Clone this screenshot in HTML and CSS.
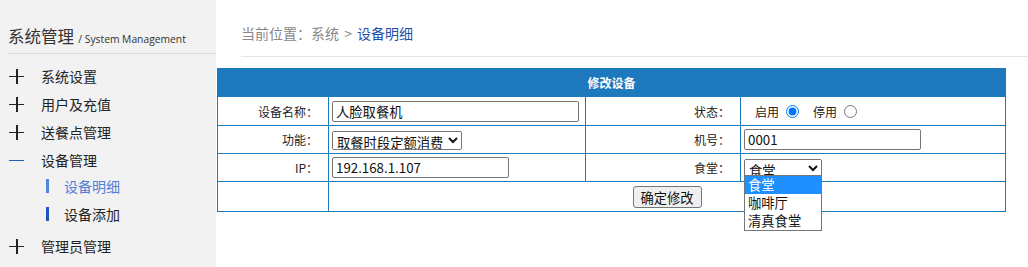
FILE: index.html
```html
<!doctype html>
<html>
<head>
<title>设备明细</title>
<link rel="stylesheet" href="styles.css">
</head>
<body>
<div class="page">
<aside class="side">
<div class="side-title">系统管理 <span class="sub">/ System Management</span></div>
<ul class="menu">
<li class="item"><span class="ico plus"></span>系统设置</li>
<li class="item"><span class="ico plus"></span>用户及充值</li>
<li class="item"><span class="ico plus"></span>送餐点管理</li>
<li class="item open"><span class="ico minus"></span>设备管理</li>
<li class="subitem on"><span class="bar"></span>设备明细</li>
<li class="subitem"><span class="bar"></span>设备添加</li>
<li class="item last"><span class="ico plus"></span>管理员管理</li>
</ul>
</aside>
<main class="main">
<div class="crumb">当前位置：系统 &gt; <span class="cur">设备明细</span></div>
<table class="form">
<colgroup>
<col class="c1"><col class="c2"><col class="c3"><col class="c4">
</colgroup>
<tr class="head"><th colspan="4">修改设备</th></tr>
<tr class="r1">
<td class="lab">设备名称：</td>
<td><input type="text" class="t-name" value="人脸取餐机"></td>
<td class="lab">状态：</td>
<td><span class="rd">启用</span><input type="radio" name="st" checked><span class="rd second">停用</span><input type="radio" name="st"></td>
</tr>
<tr class="r2">
<td class="lab">功能：</td>
<td><select class="s-fn"><option>取餐时段定额消费</option></select></td>
<td class="lab">机号：</td>
<td><input type="text" class="t-no" value="0001"></td>
</tr>
<tr class="r3">
<td class="lab">IP：</td>
<td><input type="text" class="t-ip" value="192.168.1.107"></td>
<td class="lab">食堂：</td>
<td><span class="dd"><select class="s-ct"><option>食堂</option><option>咖啡厅</option><option>清真食堂</option></select>
<div class="pop"><div class="opt sel">食堂</div><div class="opt">咖啡厅</div><div class="opt">清真食堂</div></div></span></td>
</tr>
<tr class="r4">
<td></td>
<td colspan="3" class="btncell"><button class="ok">确定修改</button></td>
</tr>
</table>
</main>
</div>
</body>
</html>
```
FILE: styles.css
```css
body {
	margin : 0;
	font-family : "Open Sans", "Noto Sans CJK SC", sans-serif;
	background : #fff;
}
.page {
	display : flex;
	height : 267px;
	overflow : hidden;
}
.side {
	width : 216px;
	flex : none;
	background : #f2f2f2;
}
.side-title {
	margin-left : 8px;
	height : 54px;
	box-sizing : border-box;
	padding-top : 25px;
	font-size : 16.5px;
	line-height : 24px;
	color : #333;
	border-bottom : 1px solid #dcdcdc;
}
.side-title .sub {
	font-size : 10.3px;
	color : #333;
}
.menu {
	list-style : none;
	margin : 8px 0 0 0;
	padding : 0;
}
.item, .subitem {
	display : flex;
	align-items : center;
	height : 28px;
	font-family : "Noto Sans CJK SC", sans-serif;
	font-size : 14px;
	color : #222;
}
.item {
	padding-left : 9px;
}
.item.last {
	margin-top : 4px;
}
.ico {
	width : 15px;
	height : 15px;
	margin-right : 17px;
	position : relative;
}
.ico::before, .plus::after {
	content : "";
	position : absolute;
	background : #222;
}
.ico::before {
	left : 0;
	right : 0;
	top : 7px;
	height : 1.5px;
}
.plus::after {
	top : 0;
	bottom : 0;
	left : 7px;
	width : 1.5px;
}
.minus::before {
	background : #1f5fb8;
}
.subitem {
	padding-left : 46px;
}
.subitem.on {
	margin-top : -2px;
	color : #4f7fd6;
}
.bar {
	width : 3px;
	height : 14px;
	background : #1c58c0;
	margin-right : 15px;
}
.subitem.on .bar {
	background : #4f86e0;
}
.main {
	flex : 1;
}
.crumb {
	margin-left : 25px;
	height : 57px;
	box-sizing : border-box;
	padding-top : 22px;
	font-family : "Noto Sans CJK SC", sans-serif;
	font-size : 14px;
	line-height : 22px;
	color : #888;
	border-bottom : 1px solid #e4e4e4;
	word-spacing : 2px;
}
.crumb .cur {
	color : #1f4fa8;
}
.form {
	margin : 11px 0 0 1px;
	width : 788px;
	table-layout : fixed;
	border-collapse : collapse;
	font-family : "Noto Sans CJK SC", sans-serif;
	font-size : 12px;
	color : #222;
}
.c1 { width : 111px; }
.c2 { width : 257px; }
.c3 { width : 155px; }
.c4 { width : 265px; }
.form td, .form th {
	border : 1px solid #1a7bbf;
	padding : 0;
	white-space : nowrap;
}
.head th {
	height : 27px;
	color : #fff;
	font-weight : bold;
	font-size : 12px;
	background-color : #1a78bf;
	background-image : repeating-conic-gradient(#2a88cc 0 25%, #1169ae 0 50%);
	background-size : 2px 2px;
}
.r1 td { height : 28px; }
.r2 td, .r3 td { height : 27px; }
.r4 td { height : 29px; }
.lab {
	text-align : right;
	padding-right : 10px !important;
}
.form td:not(.lab) {
	padding-left : 3px;
}
input[type=text], select, button {
	font-family : "Noto Sans CJK SC", sans-serif;
	font-size : 13.3px;
	box-sizing : border-box;
	color : #111;
}
input[type=text] {
	height : 21px;
	border : 1px solid #767676;
	border-radius : 2px;
	padding : 0 3px;
	vertical-align : middle;
}
.t-name { width : 247px; }
.t-ip { width : 177px; }
.t-no { width : 177px; }
select {
	height : 19px;
	padding : 0;
	vertical-align : middle;
}
.s-fn { width : 130px; }
.s-ct { width : 78px; }
.rd {
	margin-left : 11px;
}
.rd.second {
	margin-left : 14px;
}
input[type=radio] {
	margin : 0 0 0 7px;
	vertical-align : -1px;
}
.dd {
	position : relative;
	display : inline-block;
}
.pop {
	position : absolute;
	left : 0;
	top : 18px;
	width : 78px;
	box-sizing : border-box;
	border : 1px solid #767676;
	background : #fff;
	z-index : 2;
	font-size : 13.3px;
	line-height : 18px;
}
.opt {
	padding-left : 3px;
	color : #111;
}
.opt.sel {
	background : #1e90ff;
	color : #fff;
}
.btncell {
	text-align : center;
	padding-left : 0 !important;
}
.ok {
	height : 22px;
	width : 69px;
	padding : 0;
	border : 1px solid #767676;
	border-radius : 3px;
	background : #efefef;
	margin-top : 1px;
}
```
